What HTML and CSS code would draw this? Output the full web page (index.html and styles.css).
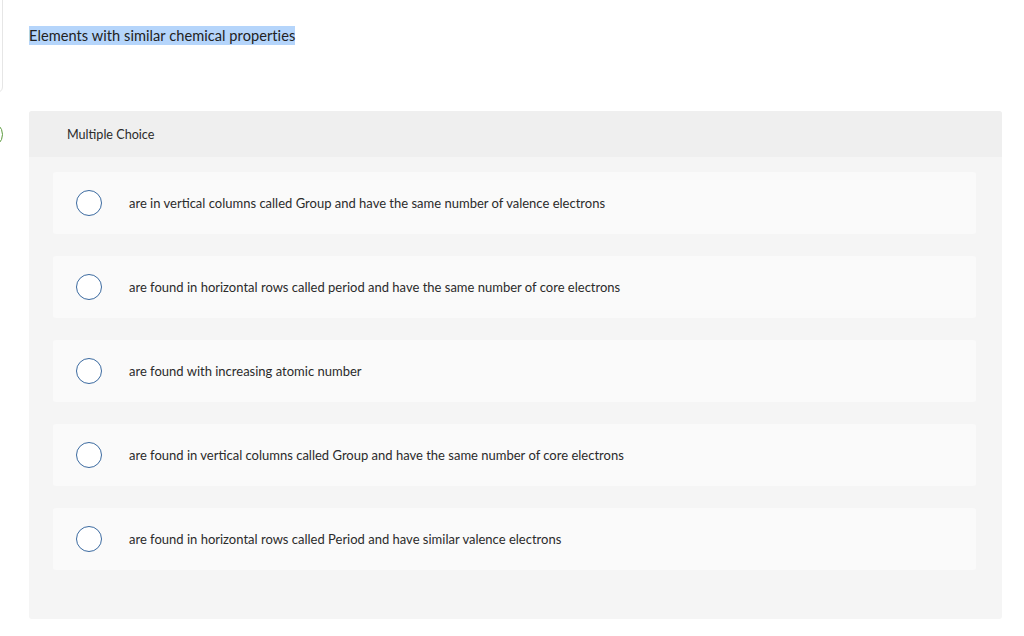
FILE: index.html
```html
<!DOCTYPE html>
<html>
<head>
<meta charset="utf-8">
<link rel="stylesheet" href="styles.css">
</head>
<body>
<div class="page">
  <div class="gutter">
    <div class="side-card"></div>
    <div class="side-dot"></div>
  </div>
  <main class="content">
    <div class="prompt"><span class="sel">Elements with similar chemical properties</span></div>
    <section class="panel">
      <div class="panel-head">Multiple Choice</div>
      <div class="panel-body">
        <label class="option"><span class="radio"></span><span class="opt-text">are in vertical columns called Group and have the same number of valence electrons</span></label>
        <label class="option"><span class="radio"></span><span class="opt-text">are found in horizontal rows called period and have the same number of core electrons</span></label>
        <label class="option"><span class="radio"></span><span class="opt-text">are found with increasing atomic number</span></label>
        <label class="option"><span class="radio"></span><span class="opt-text">are found in vertical columns called Group and have the same number of core electrons</span></label>
        <label class="option"><span class="radio"></span><span class="opt-text">are found in horizontal rows called Period and have similar valence electrons</span></label>
      </div>
    </section>
  </main>
</div>
</body>
</html>
```

FILE: styles.css
```css
html, body {
  margin: 0;
  padding: 0;
  background: #ffffff;
}
body {
  font-family: Lato, "Open Sans", "Liberation Sans", sans-serif;
  color: #2b2b2b;
  width: 1024px;
  height: 636px;
  overflow: hidden;
}
.page {
  display: grid;
  grid-template-columns: 29px 973px;
}
.gutter {
  overflow: hidden;
  display: flex;
  flex-direction: column;
}
.side-card {
  margin-left: -29px;
  margin-top: -10px;
  width: 32px;
  height: 103px;
  border: 1px solid #e6e6e6;
  border-radius: 6px;
  box-sizing: border-box;
}
.side-dot {
  margin-top: 28px;
  margin-left: -24px;
  width: 27px;
  height: 27px;
  border: 1px solid #5b9a3d;
  border-radius: 50%;
  box-sizing: border-box;
}
.content {
  padding-top: 26px;
}
.prompt {
  font-size: 14.6px;
  line-height: 19px;
  height: 19px;
}
.sel {
  display: inline-block;
  line-height: 19px;
  background: #b5d5fb;
  color: #222;
  letter-spacing: 0.05px;
}
.panel {
  margin-top: 66px;
  background: #f5f5f5;
  border-radius: 3px;
  height: 508px;
  box-sizing: border-box;
}
.panel-head {
  height: 46px;
  background: #efefef;
  border-radius: 3px 3px 0 0;
  padding-left: 38px;
  display: flex;
  align-items: center;
  font-size: 12.6px;
  color: #2b2b2b;
}
.panel-body {
  padding: 15px 26px 50px 24px;
  display: flex;
  flex-direction: column;
  gap: 22px;
}
.option {
  height: 62px;
  background: #fafafa;
  border-radius: 3px;
  display: flex;
  align-items: center;
  padding-left: 23px;
}
.radio {
  width: 26px;
  height: 26px;
  border: 1px solid #3b6aa0;
  border-radius: 50%;
  background: #ffffff;
  box-sizing: border-box;
  flex: none;
}
.opt-text {
  margin-left: 27px;
  font-size: 13px;
  color: #2b2b2b;
}
```
